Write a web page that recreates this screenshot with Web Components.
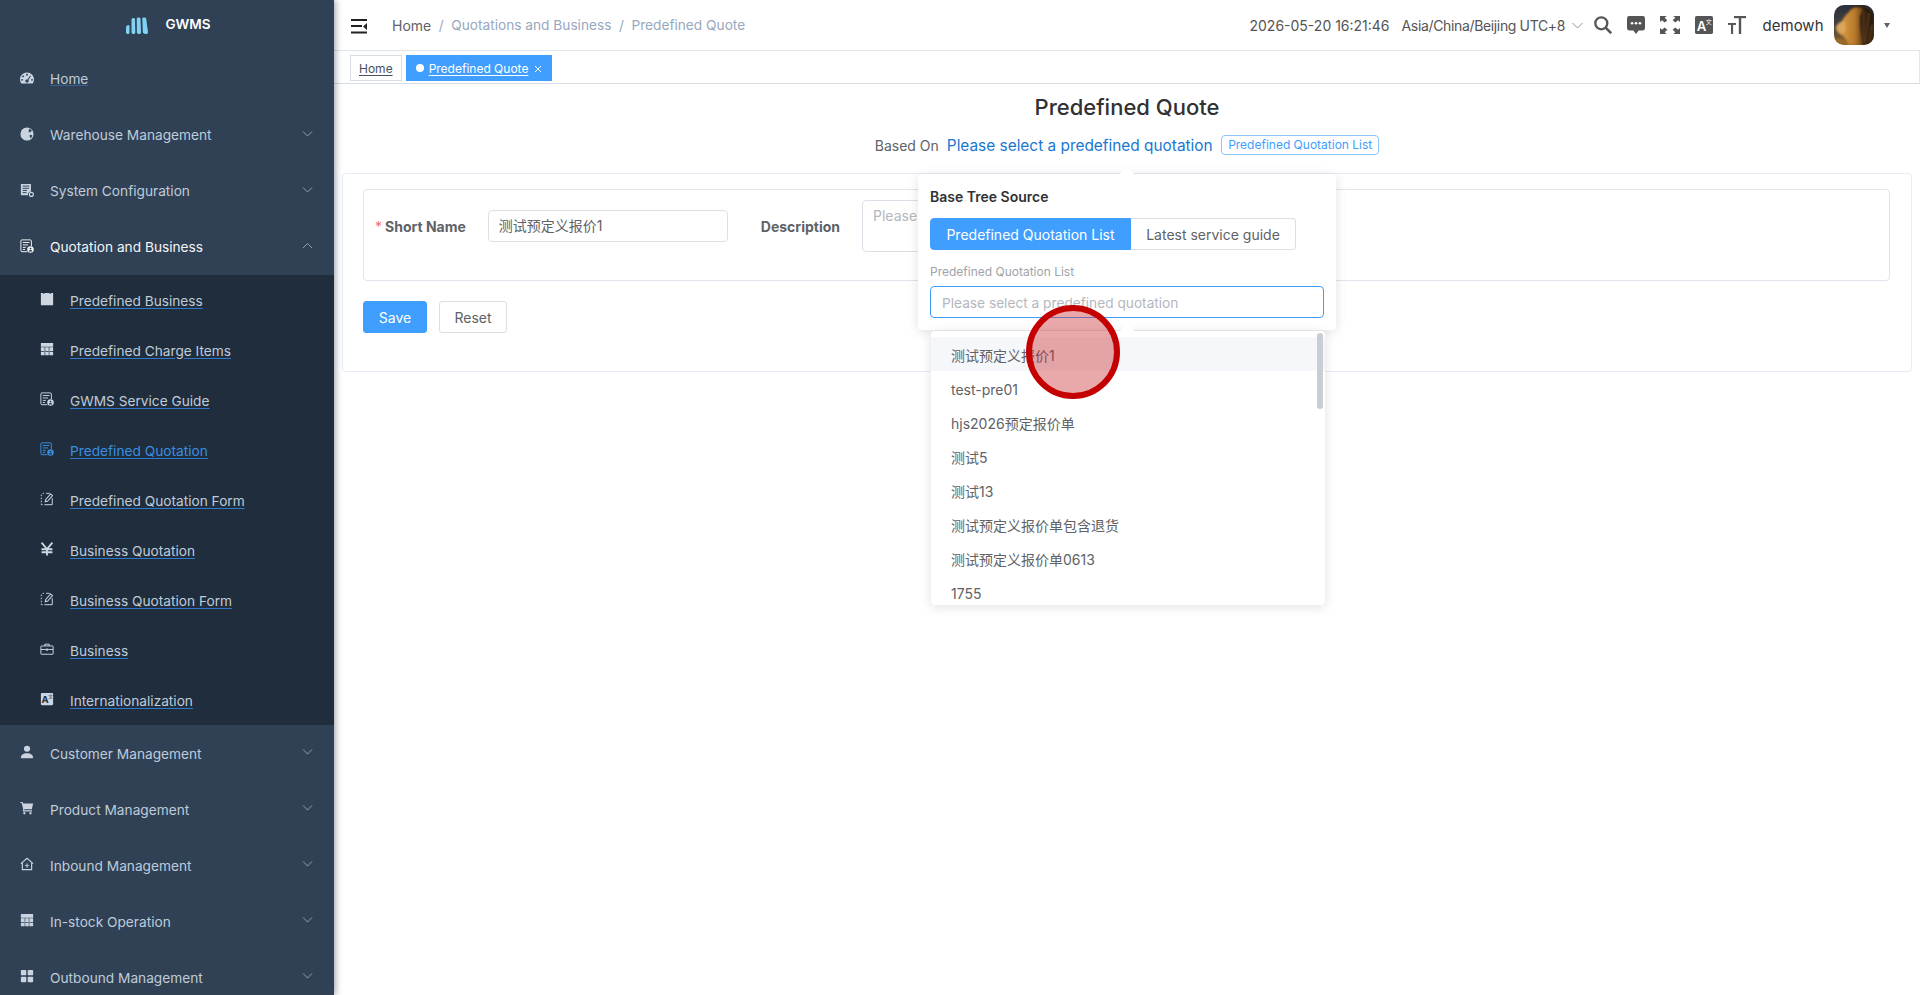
<!DOCTYPE html>
<html lang="en">
<head>
<meta charset="utf-8">
<title>Predefined Quote</title>
<style>
  html, body { margin: 0; height: 100%; overflow: hidden; background: #fff; }
  body { display: flex; font-family: Inter, "Noto Sans CJK SC", sans-serif; font-size: 14px; color: #606266; }
  gw-main { flex: 1; min-width: 0; }
</style>
</head>
<body>
<gw-sidebar>
  <gw-menu-item icon="dashboard">Home</gw-menu-item>
  <gw-menu-item icon="globe" arrow="down">Warehouse Management</gw-menu-item>
  <gw-menu-item icon="server" arrow="down">System Configuration</gw-menu-item>
  <gw-menu-item icon="quote" arrow="up" open>Quotation and Business</gw-menu-item>
  <gw-submenu>
    <gw-sub-item icon="block">Predefined Business</gw-sub-item>
    <gw-sub-item icon="table">Predefined Charge Items</gw-sub-item>
    <gw-sub-item icon="quote">GWMS Service Guide</gw-sub-item>
    <gw-sub-item icon="quote" active>Predefined Quotation</gw-sub-item>
    <gw-sub-item icon="edit">Predefined Quotation Form</gw-sub-item>
    <gw-sub-item icon="yen">Business Quotation</gw-sub-item>
    <gw-sub-item icon="edit">Business Quotation Form</gw-sub-item>
    <gw-sub-item icon="case">Business</gw-sub-item>
    <gw-sub-item icon="lang">Internationalization</gw-sub-item>
  </gw-submenu>
  <gw-menu-item icon="user" arrow="down" nudge>Customer Management</gw-menu-item>
  <gw-menu-item icon="cart" arrow="down" nudge>Product Management</gw-menu-item>
  <gw-menu-item icon="house" arrow="down" nudge>Inbound Management</gw-menu-item>
  <gw-menu-item icon="table" arrow="down" nudge>In-stock Operation</gw-menu-item>
  <gw-menu-item icon="grid" arrow="down" nudge>Outbound Management</gw-menu-item>
</gw-sidebar>
<gw-main>
  <gw-header></gw-header>
  <gw-tags></gw-tags>
  <gw-page></gw-page>
</gw-main>
<gw-cursor></gw-cursor>

<script>
const ICONS = {
  dashboard: `<path fill-rule="evenodd" d="M8 1.600C3.600 1.600 0 5 0 9.400c0 1.700.5 3.200 1.200 4.300.2.400.6.600 1 .6h11.600c.4 0 .8-.2 1-.6.7-1.100 1.200-2.600 1.200-4.300 0-4.400-3.600-7.800-8-7.800zM8 3.200a1.100 1.100 0 1 1 0 2.200 1.100 1.100 0 0 1 0-2.200zM3.600 5a1.100 1.100 0 1 1 0 2.200 1.100 1.100 0 0 1 0-2.200zM2.300 9a1.100 1.100 0 1 1 0 2.200 1.100 1.100 0 0 1 0-2.200zm11.400 0a1.100 1.100 0 1 1 0 2.200 1.100 1.100 0 0 1 0-2.200zM11.600 5.200l.9.7-2.900 4.400c.3.400.4.800.4 1.200 0 1-.9 1.800-2 1.800s-2-.8-2-1.800.9-1.800 2-1.800h.6z"/>`,
  globe: `<path fill-rule="evenodd" d="M8 .5a7.500 7.500 0 1 0 0 15 7.500 7.500 0 0 0 0-15zm2.500 1.100c1.500.6 2.600 1.600 3.300 3l-1.500.3-.6 1.300-1.500-.4-.6-1.500.9-1zM11 9l2.300.2.800 1-1.800 2.700-1-1.300z"/>`,
  server: `<path d="M1 1h11.500v8.700a3.900 3.900 0 0 0-3.400 4.300H1.800A.8.8 0 0 1 1 13.200z"/><path d="M3 3.500h7.500M3 6h7.500M3 8.500h5M3 11h4.500" stroke="#304156" stroke-width="1.100" fill="none"/><circle cx="13" cy="13" r="2.200" fill="none" stroke="currentColor" stroke-width="1.400"/>`,
  quote: `<path fill="none" stroke="currentColor" stroke-width="1.100" d="M8.300 14.500H2.300A1.300 1.300 0 0 1 1 13.200V2.300A1.300 1.300 0 0 1 2.300 1h9.400A1.300 1.300 0 0 1 13 2.300v6"/><path fill="none" stroke="currentColor" stroke-width="1.100" d="M3.200 4h7.600M3.200 6.800h6M3.200 9.600h3.500M3.200 12h2.500"/><circle cx="12" cy="12" r="3.700"/><circle cx="12" cy="10.900" r="1" fill="#26374a"/><path d="M10.100 14.200a1.900 1.700 0 0 1 3.800 0z" fill="#26374a"/>`,
  block: `<path d="M1 1h2.800v1.300h1.200V1h6v1.300h1.200V1H15v14H1z"/>`,
  table: `<path fill-rule="evenodd" d="M1 1h14v14H1zM1 5.300v.7h14v-.7zM5.300 6v9H6V6zM10 6v9h.7V6zM1 10.300v.7h14v-.7z"/>`,
  edit: `<path fill="none" stroke="currentColor" stroke-width="1.100" d="M3 1.500h1.500M1.500 3v1.700M1.500 6.500v1.700M1.500 10v1.700M1.500 13.200v1.300h1.500M5 14.500h9V7M7 1.500h4"/><path fill="none" stroke="currentColor" stroke-width="1.200" d="M6 11.200l.6-2.700 5.500-6.300 2.200 1.900-5.500 6.300z"/>`,
  yen: `<path fill="none" stroke="currentColor" stroke-width="2.100" d="M1.800 .8L8 8l6.200-7.200M8 8v7.500M1.800 8.300h12.400M1.800 11.700h12.400"/>`,
  case: `<path fill="none" stroke="currentColor" stroke-width="1.100" d="M1.500 4.500h13a.5.5 0 0 1 .5.500v8.500a.5.5 0 0 1-.5.500h-13a.5.5 0 0 1-.5-.500V5a.5.5 0 0 1 .5-.500zM5.500 4.500V2.500h5v2M1 8.500h6M9 8.500h6"/><rect x="7" y="7.500" width="2" height="2.500"/>`,
  lang: `<rect x="1" y="1" width="14" height="14" rx="1.200"/><text x="1.800" y="13" font-family="Inter, sans-serif" font-weight="700" font-size="11" fill="#1f2d3d">A</text><text x="9.300" y="7" font-family="Noto Sans CJK SC, sans-serif" font-size="5.500" fill="#1f2d3d">文</text>`,
  user: `<circle cx="8" cy="4.300" r="3.500"/><path d="M1 14.300c0-3 2.800-5 7-5s7 2 7 5c0 .5-.3.8-.8.8H1.800c-.5 0-.8-.3-.8-.8z"/>`,
  cart: `<path d="M.5 1H3l.6 1.800H15l-1.500 6.700H5l-.2 1.200h9V12H3.200l.5-2.700L1.900 2.300H.5z"/><circle cx="5" cy="14" r="1.300"/><circle cx="12" cy="14" r="1.300"/>`,
  house: `<path fill="none" stroke="currentColor" stroke-width="1.300" d="M1 7.500L8 1.500l7 6M2.700 6.500v8h10.600v-8"/><path d="M5.500 9.300h5v1.100h-5zM7.400 7.400h1.200v5h-1.200z"/>`,
  grid: `<rect x="1" y="1" width="6.200" height="6.200" rx="1"/><rect x="8.800" y="1" width="6.200" height="6.200" rx="1"/><rect x="1" y="8.800" width="6.200" height="6.200" rx="1"/><rect x="8.800" y="8.800" width="6.200" height="6.200" rx="1"/>`
};
const svgIcon = (name, size) => `<svg width="${size}" height="${size}" viewBox="0 0 16 16" fill="currentColor">${ICONS[name]}</svg>`;

class GwSidebar extends HTMLElement {
  constructor() {
    super();
    this.attachShadow({ mode: 'open' }).innerHTML = `
      <style>
        :host { display: block; flex: 0 0 334px; width: 334px; height: 100vh; overflow: hidden; background: #304156; box-shadow: 2px 0 6px rgba(0,21,41,.35); position: relative; z-index: 2; }
        .logo { height: 51px; display: flex; justify-content: center; align-items: flex-start; gap: 17px; padding: 15px 0 0 3px; box-sizing: border-box; }
        .logo span { color: #fff; font-weight: 600; font-size: 13.500px; line-height: 18px; }
      </style>
      <div class="logo">
        <svg width="22" height="17" viewBox="0 0 22 17" fill="#7fd2f2" style="margin-top:2px"><path d="M0 10.500C0 9.500 1 8.500 2 8c.8 0 1.500.7 1.500 1.500v6c0 .8-.6 1.500-1.700 1.500S0 16.300 0 15.500z"/><path d="M5.500 2.500C6 1 8.700.5 9 2l.3 13.500c0 .8-.7 1.500-1.800 1.500s-2-.7-2-1.500z"/><path d="M10.800 1.500c.6-1.300 3.300-1.300 3.700.2l.5 13.800c0 .8-.8 1.500-1.900 1.500-1.300 0-2.100-.7-2.200-1.500z"/><path d="M16.300 1.500c.6-1.300 3.500-1.300 3.900.2l1.800 13.800c0 .8-.8 1.500-2 1.500-1.500 0-3-.7-3.200-1.500z"/></svg>
        <span>GWMS</span>
      </div>
      <slot></slot>`;
  }
}

class GwMenuItem extends HTMLElement {
  constructor() {
    super();
    const open = this.hasAttribute('open');
    const arrow = this.getAttribute('arrow');
    const arrowPath = arrow === 'up' ? 'M1 6l4.500-4.500L10 6' : 'M1 1.500L5.500 6 10 1.500';
    this.attachShadow({ mode: 'open' }).innerHTML = `
      <style>
        :host { display: flex; align-items: center; height: 56px; padding-left: 20px; padding-right: 21px; color: ${open ? '#f4f4f5' : '#bfcbd9'}; font-size: 13.700px; }
        svg.icon { flex: none; margin-right: 16px; margin-top: -3px; color: ${open ? '#f4f4f5' : '#c9d4e0'}; }
        .label { flex: 1; line-height: 20px; margin-top: ${this.hasAttribute('nudge') ? 1 : 0}px; }
        .arrow { color: #909fb1; margin-top: -3px; }
        .label.plain { text-decoration: underline; text-decoration-color: #3b628d; }
      </style>
      ${svgIcon(this.getAttribute('icon'), 14)}
      <span class="label ${arrow ? '' : 'plain'}"><slot></slot></span>
      ${arrow ? `<svg class="arrow" width="11" height="8" viewBox="0 0 11 8" fill="none" stroke="currentColor" stroke-width="1"><path d="${arrowPath}"/></svg>` : ''}`;
    this.shadowRoot.querySelector('svg').classList.add('icon');
  }
}

class GwSubmenu extends HTMLElement {
  constructor() {
    super();
    this.attachShadow({ mode: 'open' }).innerHTML = `
      <style>:host { display: block; background: #1f2d3d; }</style><slot></slot>`;
  }
}

class GwSubItem extends HTMLElement {
  constructor() {
    super();
    const active = this.hasAttribute('active');
    this.attachShadow({ mode: 'open' }).innerHTML = `
      <style>
        :host { display: flex; align-items: center; height: 50px; padding-left: 40px; color: ${active ? '#3a8ee0' : '#bfcbd9'}; font-size: 13.700px; }
        svg { margin-right: 16px; margin-top: -3px; flex: none; color: ${active ? '#3a8ee0' : '#cdd7e2'}; }
        .label { margin-top: 1px; text-decoration: underline; text-decoration-color: #2f79c8; text-underline-offset: 2px; }
      </style>
      ${svgIcon(this.getAttribute('icon'), 14)}
      <span class="label"><slot></slot></span>`;
  }
}

class GwHeader extends HTMLElement {
  constructor() {
    super();
    this.attachShadow({ mode: 'open' }).innerHTML = `
      <style>
        :host { display: flex; align-items: center; height: 50px; border-bottom: 1px solid #dfe4ed; padding-left: 17px; font-size: 14px; color: #606266; }
        .crumbs { display: flex; align-items: center; margin-left: 24px; color: #97a8be; flex: 1; font-size: 13.700px; }
        .crumbs b { font-weight: 400; color: #606266; font-size: 14px; }
        .crumbs i { font-style: normal; color: #97a8be; margin: 0 7.500px; }
        .right { display: flex; align-items: center; padding-right: 30px; color: #555; }
        .time { margin-right: 12px; white-space: nowrap; }
        .tz { white-space: nowrap; letter-spacing: -.35px; margin-right: 7px; }
        .chev { margin-right: 11px; }
        .tool { margin-right: 15px; display: block; }
        .tool.last { margin-right: 16.500px; }
        .user { font-size: 15px; color: #333; margin-right: 10.500px; }
        .caret { width: 0; height: 0; border: 3.500px solid transparent; border-top: 5px solid #606266; border-bottom: 0; margin-left: 10px; }
      </style>
      <svg width="17" height="15" viewBox="0 0 17 15" fill="#222" style="margin-top:2px"><rect width="16" height="2"/><rect y="6" width="11" height="2"/><rect y="12.500" width="16" height="2"/><path d="M16 4v7l-4-3.500z"/></svg>
      <div class="crumbs"><b>Home</b><i>/</i>Quotations and Business<i>/</i>Predefined Quote</div>
      <div class="right">
        <span class="time">2026-05-20 16:21:46</span>
        <span class="tz">Asia/China/Beijing UTC+8</span>
        <svg class="chev" width="11" height="7" viewBox="0 0 11 7" fill="none" stroke="#909399"><path d="M.5 1l5 5 5-5"/></svg>
        <svg class="tool" width="18" height="18" viewBox="0 0 18 18" fill="none" stroke="#555" stroke-width="2.300"><circle cx="7.300" cy="7.300" r="6"/><path d="M11.600 11.600l5.600 5.600" stroke-width="2.600"/></svg>
        <svg class="tool" width="18" height="18" viewBox="0 0 15 15" fill="#555"><path d="M1.800 0h11.400A1.800 1.800 0 0 1 15 1.800v8.400a1.800 1.800 0 0 1-1.800 1.800H9.700l-2.200 3-2.200-3H1.800A1.800 1.800 0 0 1 0 10.200V1.800A1.800 1.800 0 0 1 1.800 0z"/><circle cx="4.200" cy="6" r="1.100" fill="#fff"/><circle cx="7.500" cy="6" r="1.100" fill="#fff"/><circle cx="10.800" cy="6" r="1.100" fill="#fff"/></svg>
        <svg class="tool" width="20" height="18" viewBox="0 0 15 15" preserveAspectRatio="none" fill="#555"><path d="M0 0h5L3.500 1.500 5.500 3.500 3.500 5.500 1.500 3.500 0 5zM15 0v5l-1.500-1.500-2 2-2-2 2-2L10 0zM0 15v-5l1.500 1.500 2-2 2 2-2 2L5 15zM15 15h-5l1.500-1.500-2-2 2-2 2 2L15 10z"/></svg>
        <svg class="tool" width="18" height="18" viewBox="0 0 15 15"><rect width="15" height="15" rx="1.500" fill="#555"/><text x="1.500" y="12.500" font-family="Inter, sans-serif" font-weight="600" font-size="11" fill="#fff">A</text><text x="9" y="6.500" font-family="Noto Sans CJK SC, sans-serif" font-size="5" fill="#fff">文</text></svg>
        <svg class="tool last" width="18" height="18" viewBox="0 0 18 18" fill="#555"><rect x="6" y="0" width="12" height="2.200"/><rect x="10.800" y="0" width="2.400" height="18"/><rect x="0" y="7" width="8" height="1.900"/><rect x="3" y="7" width="2.100" height="11"/></svg>
        <span class="user">demowh</span>
        <svg width="40" height="40" viewBox="0 0 40 40">
          <defs>
            <clipPath id="av"><rect width="40" height="40" rx="10"/></clipPath>
            <linearGradient id="sky" x1="0" y1="0" x2="0" y2="1"><stop offset="0" stop-color="#2b2e3c"/><stop offset=".6" stop-color="#4a4640"/><stop offset="1" stop-color="#8f6226"/></linearGradient>
            <linearGradient id="mane" x1="0" y1="0" x2="1" y2="0"><stop offset="0" stop-color="#e7a94f"/><stop offset=".7" stop-color="#b8792a"/><stop offset="1" stop-color="#6a4118"/></linearGradient>
            <filter id="soft"><feGaussianBlur stdDeviation="1"/></filter>
          </defs>
          <g clip-path="url(#av)">
            <rect width="40" height="40" fill="url(#sky)"/>
            <g filter="url(#soft)">
              <path d="M18 2c7-3 16 0 22 6v32H16z" fill="#2b1b11"/>
              <path d="M35 8l-4 30M30 6l-1 32M38 20l-3 18M25 10l1 28" stroke="#6a4420" stroke-width="1.300" fill="none"/>
              <path d="M14 8C17 3 23 1 29 4c-2 4-4 7-4 12 0 8 2 14 3 24H14c-1-4-3-7-5-9-4-2-7-5-7-8 1-3 3-4 6-6 1-4 3-6 6-9z" fill="url(#mane)"/>
              <path d="M2 22c1-3 3-4 6-6l3 1 1 8-4 4c-3-1-5-4-6-7z" fill="#dba65c"/>
              <path d="M0 34c6-1 10 0 14 2v4H0z" fill="#9a6a28"/>
            </g>
          </g>
        </svg>
        <span class="caret"></span>
      </div>`;
  }
}

class GwTags extends HTMLElement {
  constructor() {
    super();
    this.attachShadow({ mode: 'open' }).innerHTML = `
      <style>
        :host { display: flex; align-items: flex-start; height: 28px; padding: 4px 0 0 16px; border-bottom: 1px solid #d8dce5; border-right: 1px solid #e4e7ed; font-size: 12px; gap: 4px; }
        .tag { display: flex; align-items: center; box-sizing: border-box; height: 26px; padding: 0 8px; border: 1px solid #d8dce5; color: #495060; text-decoration: underline; text-underline-offset: 2px; }
        .tag.on { background: #409eff; border-color: #409eff; color: #fff; padding: 0 8px 0 9px; width: 146px; }
        .dot { width: 8px; height: 8px; border-radius: 50%; background: #fff; margin-right: 5px; flex: none; }
        svg { margin-left: 6px; flex: none; margin-top: 2px; }
      </style>
      <span class="tag">Home</span>
      <span class="tag on"><span class="dot"></span>Predefined Quote<svg width="8" height="8" viewBox="0 0 8 8" stroke="#fff" fill="none"><path d="M1 1l6 6M7 1l-6 6"/></svg></span>`;
  }
}

class GwPage extends HTMLElement {
  constructor() {
    super();
    this.attachShadow({ mode: 'open' }).innerHTML = `
      <style>
        :host { display: block; position: relative; padding-top: 8px; }
        h1 { margin: 0; font-size: 22px; line-height: 30px; font-weight: 500; color: #303133; text-align: center; }
        .based { display: flex; justify-content: center; align-items: center; height: 24px; margin-top: 11px; }
        .based .link { font-size: 15.400px; color: #1976d2; margin: 0 8.500px 0 8px; }
        .pill { font-size: 12px; color: #409eff; border: 1px solid #8cc5ff; border-radius: 4px; height: 20px; line-height: 18px; padding: 0 6px; box-sizing: border-box; }
        .card { margin: 16px 8px 0; border: 1px solid #e6ebf5; border-radius: 4px; padding: 15px 21px 38px 20px; }
        .inner { border: 1px solid #dfe4ed; border-radius: 4px; display: flex; align-items: center; padding: 10px 0 28px; height: 52px; }
        .star { color: #f56c6c; margin: 0 3px 0 11px; }
        label { font-weight: 700; color: #606266; margin-right: 22px; }
        .input { box-sizing: border-box; width: 240px; height: 32px; border: 1px solid #dcdfe6; border-radius: 4px; padding: 0 10px; line-height: 30px; color: #606266; font-size: 14px; }
        .desc { margin-left: 33px; }
        .area { box-sizing: border-box; width: 300px; height: 52px; border: 1px solid #dcdfe6; border-radius: 4px; padding: 5px 10px; color: #b4b7bd; line-height: 20px; }
        .btns { display: flex; gap: 12px; margin-top: 20px; }
        .btn { box-sizing: border-box; height: 32px; line-height: 31px; border: 1px solid #dcdfe6; border-radius: 3px; width: 68px; text-align: center; color: #606266; background: #fff; }
        .btn.primary { background: #409eff; border-color: #409eff; color: #fff; width: 64px; }
      </style>
      <h1>Predefined Quote</h1>
      <div class="based"><span>Based On</span><span class="link">Please select a predefined quotation</span><span class="pill">Predefined Quotation List</span></div>
      <div class="card">
        <div class="inner">
          <span class="star">*</span><label>Short Name</label>
          <div class="input">测试预定义报价1</div>
          <label class="desc">Description</label>
          <div class="area">Please input</div>
        </div>
        <div class="btns"><span class="btn primary">Save</span><span class="btn">Reset</span></div>
      </div>
      <gw-popover></gw-popover>
      <gw-dropdown></gw-dropdown>`;
  }
}

class GwPopover extends HTMLElement {
  constructor() {
    super();
    this.attachShadow({ mode: 'open' }).innerHTML = `
      <style>
        :host { position: absolute; left: 584px; top: 90px; width: 418px; height: 156px; box-sizing: border-box; background: #fff; border-radius: 4px; box-shadow: 0 2px 12px rgba(0,0,0,.12); padding: 14px 12px 0 12px; }
        :host::before { content: ""; position: absolute; left: 204px; top: -5px; width: 10px; height: 10px; background: #fff; transform: rotate(45deg); }
        .title { font-weight: 600; color: #303133; line-height: 17px; }
        .group { display: flex; margin-top: 13px; height: 32px; }
        .group span { box-sizing: border-box; line-height: 31px; border: 1px solid #dcdfe6; }
        .group .on { width: 201px; background: #409eff; border-color: #409eff; color: #fff; text-align: center; border-radius: 4px 0 0 4px; }
        .group .off { width: 165px; border-left: 0; text-align: center; border-radius: 0 4px 4px 0; color: #606266; }
        .cap { margin-top: 14px; font-size: 12px; line-height: 16px; color: #a0a3a9; }
        .input { box-sizing: border-box; margin-top: 6px; height: 32px; border: 1px solid #409eff; border-radius: 4px; padding: 0 11px; line-height: 32px; color: #b4b7bd; font-size: 13.700px; }
      </style>
      <div class="title">Base Tree Source</div>
      <div class="group"><span class="on">Predefined Quotation List</span><span class="off">Latest service guide</span></div>
      <div class="cap">Predefined Quotation List</div>
      <div class="input">Please select a predefined quotation</div>`;
  }
}

class GwDropdown extends HTMLElement {
  constructor() {
    super();
    const rows = ['测试预定义报价1', 'test-pre01', 'hjs2026预定报价单', '测试5', '测试13', '测试预定义报价单包含退货', '测试预定义报价单0613', '1755'];
    this.attachShadow({ mode: 'open' }).innerHTML = `
      <style>
        :host { position: absolute; left: 597px; top: 247px; width: 394px; height: 274px; background: #fff; border-radius: 4px; box-shadow: 0 2px 12px rgba(0,0,0,.12); }
        :host::before { content: ""; position: absolute; left: 191px; top: -5px; width: 10px; height: 10px; background: #fff; transform: rotate(45deg); }
        .list { position: relative; height: 100%; overflow: hidden; padding-top: 6px; box-sizing: border-box; border-radius: 4px; }
        .row { height: 34px; line-height: 37px; padding-left: 20px; color: #606266; }
        .row:first-child { background: #f5f7fa; }
        .bar { position: absolute; right: 2px; top: 2px; width: 6px; height: 76px; border-radius: 3px; background: #c9cdd4; }
      </style>
      <div class="list">${rows.map(r => `<div class="row">${r}</div>`).join('')}<div class="bar"></div></div>`;
  }
}

class GwCursor extends HTMLElement {
  constructor() {
    super();
    this.attachShadow({ mode: 'open' }).innerHTML = `
      <style>
        :host { position: fixed; left: 1026px; top: 305px; width: 94px; height: 94px; box-sizing: border-box; border: 6px solid #c50000; border-radius: 50%; background: rgba(200,40,45,.4); z-index: 10; }
      </style>`;
  }
}

customElements.define('gw-sidebar', GwSidebar);
customElements.define('gw-menu-item', GwMenuItem);
customElements.define('gw-submenu', GwSubmenu);
customElements.define('gw-sub-item', GwSubItem);
customElements.define('gw-header', GwHeader);
customElements.define('gw-tags', GwTags);
customElements.define('gw-popover', GwPopover);
customElements.define('gw-dropdown', GwDropdown);
customElements.define('gw-page', GwPage);
customElements.define('gw-cursor', GwCursor);
</script>
</body>
</html>
